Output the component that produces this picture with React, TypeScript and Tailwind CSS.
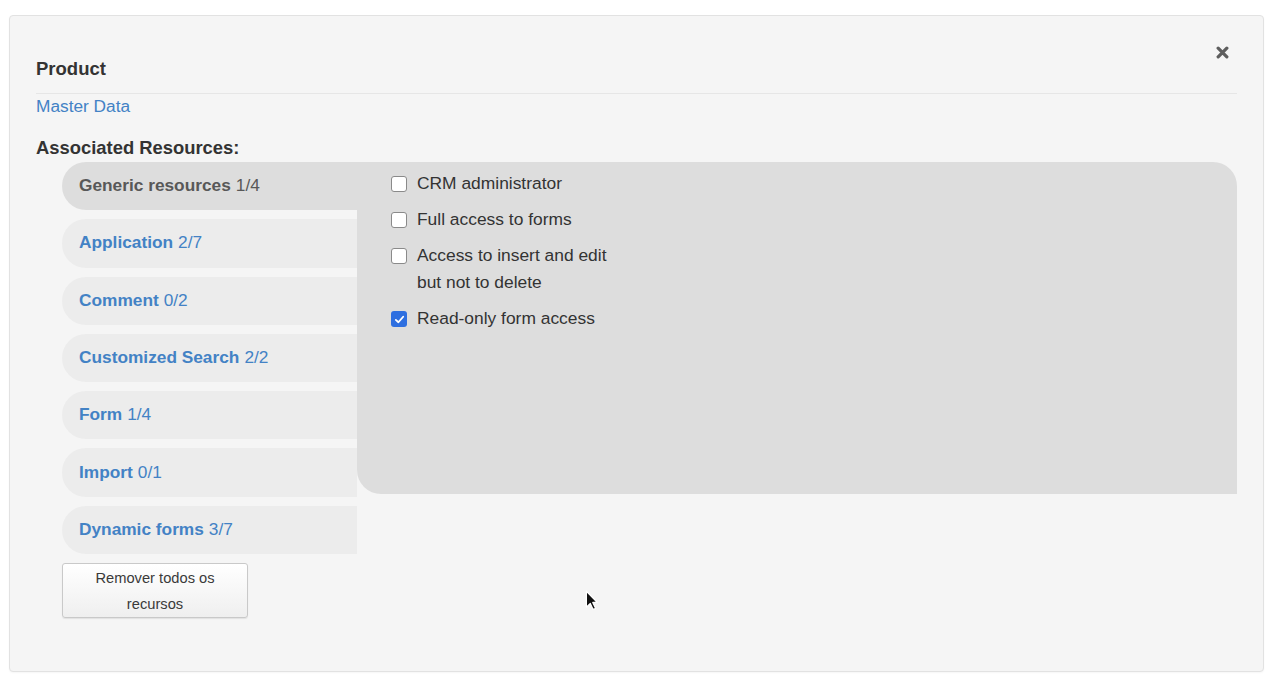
import { useState } from 'react';

interface ResourceTab {
  name: string;
  count: string;
}

const tabs: ResourceTab[] = [
  { name: 'Generic resources', count: '1/4' },
  { name: 'Application', count: '2/7' },
  { name: 'Comment', count: '0/2' },
  { name: 'Customized Search', count: '2/2' },
  { name: 'Form', count: '1/4' },
  { name: 'Import', count: '0/1' },
  { name: 'Dynamic forms', count: '3/7' },
];

const permissions = [
  { label: 'CRM administrator', checked: false },
  { label: 'Full access to forms', checked: false },
  { label: 'Access to insert and edit but not to delete', checked: false },
  { label: 'Read-only form access', checked: true },
];

function Checkbox({ checked }: { checked: boolean }) {
  if (checked) {
    return (
      <span className="mt-[6px] flex h-[16px] w-[16px] shrink-0 items-center justify-center rounded-[3px] bg-[#2e6fe0]">
        <svg viewBox="0 0 12 12" className="h-[11px] w-[11px]" fill="none">
          <path d="M2 6.4 4.8 9 10 3" stroke="white" strokeWidth="2" strokeLinecap="round" strokeLinejoin="round" />
        </svg>
      </span>
    );
  }
  return <span className="mt-[6px] h-[16px] w-[16px] shrink-0 rounded-[3px] border border-[#8a8a8a] bg-white" />;
}

export default function App() {
  const [active, setActive] = useState(0);

  return (
    <div className="min-h-screen bg-white px-[9px] pt-[15px] font-['Liberation_Sans',Arial,sans-serif] text-[#333]">
      <div className="relative h-[657px] w-[1255px] rounded-[4px] border border-[#e2e2e2] bg-[#f5f5f5] px-[26px] pt-[41px] shadow-[0_1px_2px_rgba(0,0,0,0.04)]">
        {/* Close button */}
        <button type="button" className="absolute right-[34px] top-[29px] flex h-[14px] w-[14px] items-center justify-center" aria-label="Close">
          <svg viewBox="0 0 12 12" className="h-[13px] w-[13px]">
            <path d="M2 2l8 8M10 2l-8 8" stroke="#5e5e5e" strokeWidth="3" strokeLinecap="round" />
          </svg>
        </button>

        <div className="border-b border-[#e6e6e6] pb-[12px]">
          <h3 className="text-[18.5px] font-bold leading-[24px]">Product</h3>
        </div>
        <a className="block text-[17.3px] leading-[24px] text-[#4382c5]">Master Data</a>
        <h4 className="mt-[18px] text-[18.4px] font-bold leading-[24px]">Associated Resources:</h4>

        <div className="ml-[26px] mt-[2px] flex">
          <div className="flex w-[295px] shrink-0 flex-col">
            <div className="flex flex-col gap-[9px]">
              {tabs.map((t, i) => (
                <div
                  key={t.name}
                  onClick={() => setActive(i)}
                  className={`flex h-[48.3px] cursor-pointer items-center rounded-l-[24px] pl-[17px] text-[17.3px] ${
                    i === active ? 'bg-[#dddddd] text-[#585858]' : 'bg-[#ececec] text-[#4382c5]'
                  }`}
                >
                  <span className="font-bold">{t.name}</span>
                  <span className="ml-[5px]">{t.count}</span>
                </div>
              ))}
            </div>
            <button
              type="button"
              className="mt-[9px] h-[55px] w-[186px] rounded-[3px] border border-[#c9c9c9] bg-gradient-to-b from-white to-[#efefef] text-[14.7px] leading-[26px] text-[#3a3a3a] shadow-[0_1px_1px_rgba(0,0,0,0.08)]"
            >
              Remover todos os
              <br />
              recursos
            </button>
          </div>

          <div className="h-[332px] flex-1 rounded-tr-[24px] rounded-bl-[24px] bg-[#dddddd] pl-[34px] pt-[8px]">
            <div className="flex flex-col gap-[9px]">
              {permissions.map((p) => (
                <label key={p.label} className="flex items-start gap-[10px]">
                  <Checkbox checked={p.checked} />
                  <span className="w-[205px] text-[17.4px] leading-[27px] text-[#333]">{p.label}</span>
                </label>
              ))}
            </div>
          </div>
        </div>

        {/* Mouse pointer */}
        <svg viewBox="0 0 12 18" className="pointer-events-none absolute left-[575px] top-[574px] h-[22px] w-[15px]">
          <path d="M1 1v13l3.2-3 2.3 5 2-1-2.3-4.8H10z" fill="#111" stroke="white" strokeWidth="1" strokeLinejoin="round" />
        </svg>
      </div>
    </div>
  );
}
